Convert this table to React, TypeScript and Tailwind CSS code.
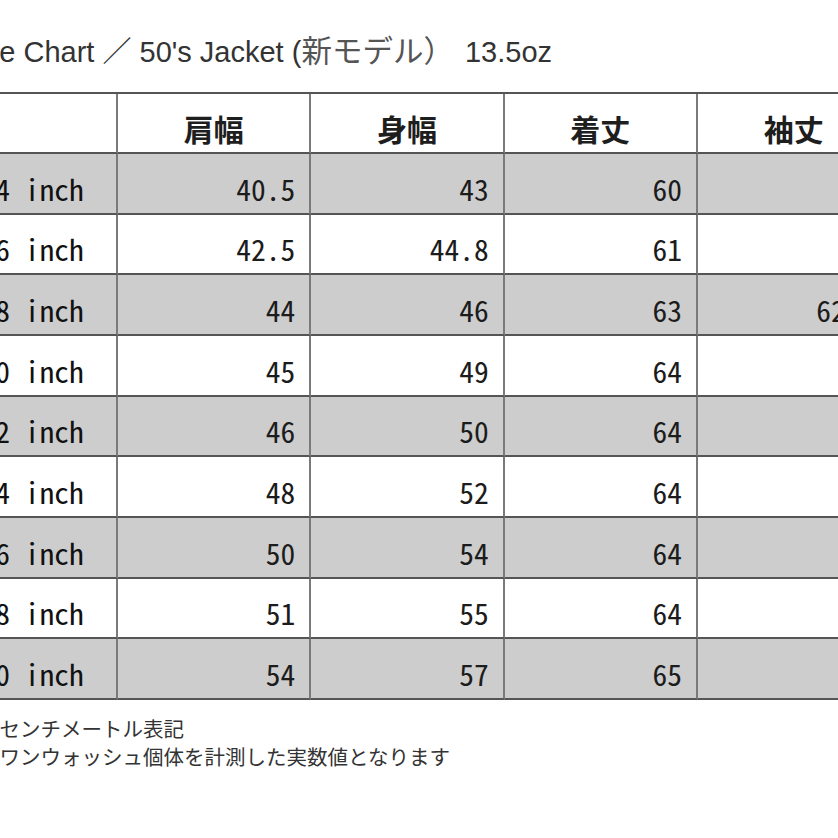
import React from "react";

const rows = [
  { size: "34 inch", a: "40.5", b: "43", c: "60", d: "61" },
  { size: "36 inch", a: "42.5", b: "44.8", c: "61", d: "62" },
  { size: "38 inch", a: "44", b: "46", c: "63", d: "62.5" },
  { size: "40 inch", a: "45", b: "49", c: "64", d: "63" },
  { size: "42 inch", a: "46", b: "50", c: "64", d: "64" },
  { size: "44 inch", a: "48", b: "52", c: "64", d: "64" },
  { size: "46 inch", a: "50", b: "54", c: "64", d: "65" },
  { size: "48 inch", a: "51", b: "55", c: "64", d: "65" },
  { size: "50 inch", a: "54", b: "57", c: "65", d: "66" },
];

const monoFont = {
  fontFamily: '"Noto Sans Mono CJK JP", "Noto Sans CJK JP", monospace',
};

export default function App() {
  return (
    <div className="w-[838px] h-[838px] overflow-hidden bg-white">
      <div
        className="h-[92px] pt-[34px] ml-[-41px] whitespace-nowrap text-[29px] leading-[34px] text-[#333]"
        style={{ fontFamily: '"Liberation Sans", "Noto Sans CJK JP", sans-serif' }}
      >
        Size Chart ／ 50's Jacket (<span className="text-[30.5px] text-[#555]">新モデル）</span>
        <span className="ml-[3px]"> 13.5oz</span>
      </div>

      <div className="ml-[-52px] w-[943px] border-t-2 border-[#555]">
        <div className="grid grid-cols-[170px_193.33px_193.33px_193.33px_193.33px] h-[60px]">
          <div className="border-r-2 border-b-2 border-r-[#7a7a7a] border-b-[#555] bg-white" />
          {["肩幅", "身幅", "着丈", "袖丈"].map((h) => (
            <div
              key={h}
              className="flex items-center justify-center pt-[10px] border-r-2 border-b-2 border-r-[#7a7a7a] border-b-[#555] bg-white text-[30px] font-bold text-[#1e1e1e]"
              style={{ fontFamily: '"Noto Sans CJK JP", sans-serif' }}
            >
              {h}
            </div>
          ))}
        </div>
        {rows.map((r, i) => {
          const bg = i % 2 === 0 ? "bg-[#cdcdcd]" : "bg-white";
          return (
            <div
              key={r.size}
              className="grid grid-cols-[170px_193.33px_193.33px_193.33px_193.33px] h-[60.67px]"
            >
              <div
                className={`flex items-center justify-center pt-[9px] whitespace-pre border-r-2 border-b-2 border-r-[#7a7a7a] border-b-[#555] ${bg} text-[29.5px] font-medium text-[#111]`}
                style={monoFont}
              >
                {r.size}
              </div>
              {[r.a, r.b, r.c, r.d].map((v, j) => (
                <div
                  key={j}
                  className={`flex items-center justify-end pt-[9px] pr-[14px] border-r-2 border-b-2 border-r-[#7a7a7a] border-b-[#555] ${bg} text-[29.5px] text-[#1c1c1c]`}
                  style={monoFont}
                >
                  {v}
                </div>
              ))}
            </div>
          );
        })}
      </div>

      <div
        className="mt-[14px] ml-[-21px] text-[20.5px] leading-[28px] text-[#333] whitespace-nowrap"
        style={{ fontFamily: '"Noto Sans CJK JP", sans-serif' }}
      >
        <div>※センチメートル表記</div>
        <div>※ワンウォッシュ個体を計測した実数値となります</div>
      </div>
    </div>
  );
}
